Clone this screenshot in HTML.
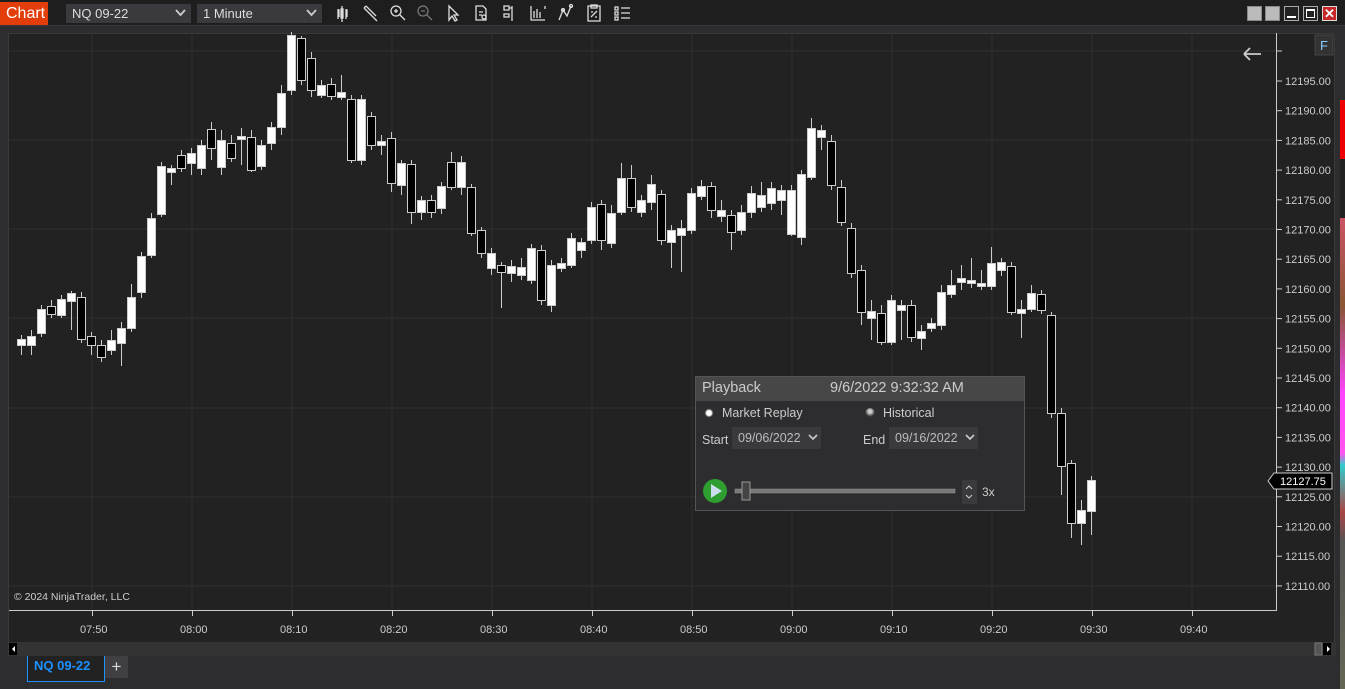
<!DOCTYPE html>
<html><head><meta charset="utf-8"><style>
*{margin:0;padding:0;box-sizing:border-box}
body{width:1345px;height:689px;background:#2d2d30;position:relative;overflow:hidden;font-family:"Liberation Sans",sans-serif;color:#ddd}
.abs{position:absolute}
#top{left:0;top:0;width:1345px;height:26px;background:#1e1e1e;border-bottom:1px solid #3a3a3a}
.sel{position:absolute;top:4px;height:19px;background:#3a3a3e;color:#ddd;font-size:13px;line-height:19px;padding-left:6px}
.sel svg{position:absolute;right:5px;top:5px}
.ti{position:absolute;top:5px}
.wb{position:absolute;top:6px;width:15px;height:15px;border:1px solid #888}
</style></head><body>
<div id="top" class="abs">
 <div class="abs" style="left:0;top:2px;width:48px;height:23px;background:#e23d0b;color:#fff;font-size:16px;line-height:23px;padding-left:6px">Chart</div>
 <div class="sel" style="left:66px;width:125px">NQ 09-22<svg width="11" height="8"><path d="M1 1l4.5 5 4.5-5" stroke="#ccc" stroke-width="1.8" fill="none"/></svg></div>
 <div class="sel" style="left:197px;width:125px">1 Minute<svg width="11" height="8"><path d="M1 1l4.5 5 4.5-5" stroke="#ccc" stroke-width="1.8" fill="none"/></svg></div>
 <svg class="ti" style="left:0;top:0" width="640" height="26" fill="none" stroke="#ddd" stroke-width="1.3">
  <path d="M338 9v10M342 6v16M346 9v10M338 10h1v7M346 10h1v7" /><rect x="341" y="9" width="2" height="9" fill="#ddd"/>
  <path d="M364 8l10 10M366 6l10 10M364 8l2-2M374 18l3 3"/>
  <circle cx="396" cy="11" r="5"/><path d="M400 15l5 5M394 11h4M396 9v4"/>
  <circle cx="423" cy="11" r="5" stroke="#777"/><path d="M427 15l5 5M421 11h4" stroke="#777"/>
  <path d="M449 6v14l3-4 3 5 2-1-3-5h4z"/>
  <path d="M476 6h7l3 3v11h-10zM479 12h4M479 15h3"/><circle cx="484" cy="17" r="2"/>
  <path d="M504 6h5v4h-5zM512 6v15M504 14h5v3h-5zM509 8h3"/>
  <path d="M531 6v14h14M534 11v7M537 9v9M540 12v6M545 6v3"/>
  <path d="M559 20l4-10 4 6 4-10M559 20"/><circle cx="563" cy="10" r="1.5"/><circle cx="571" cy="6" r="1.5"/>
  <path d="M588 6h12v15h-12zM591 5h6v3h-6zM591 17l6-6M591 12h2M595 17h2"/>
  <path d="M615 7h3v3h-3zM615 12h3v3h-3zM615 17h3v3h-3zM621 8h9M621 13h9M621 18h9"/>
 </svg>
 <div class="wb" style="left:1247px;background:#bbb"></div>
 <div class="wb" style="left:1265px;background:#bbb"></div>
 <div class="wb" style="left:1284px;background:#222;border-color:#aaa"><div class="abs" style="left:2px;top:9px;width:9px;height:2px;background:#fff"></div></div>
 <div class="wb" style="left:1303px;background:#222;border-color:#aaa"><div class="abs" style="left:2px;top:2px;width:9px;height:9px;border:1px solid #fff;border-top-width:2px"></div></div>
 <div class="wb" style="left:1322px;background:#c62828;border-color:#ddd;color:#fff;font-size:13px;line-height:13px;text-align:center;font-weight:bold">✕</div>
</div>
<div class="abs" style="left:8px;top:33px;width:1327px;height:623px;background:#222;border:1px solid #3a3a3a"></div>
<div class="abs" style="left:1340px;top:100px;width:5px;height:589px;background:linear-gradient(#e00 0,#e00 10%,#222 10%,#222 20%,#c56 20%,#853 35%,#f4f 50%,#f5e 60%,#3cc 62%,#a44 70%,#555 75%,#665 100%)"></div>
<svg class="abs" style="left:0;top:0" width="1345" height="689" id="ch">
 <g stroke="#303030" stroke-width="1">
  <path d="M92 33V610M192 33V610M292 33V610M392 33V610M492 33V610M592 33V610M692 33V610M792 33V610M892 33V610M992 33V610M1092 33V610M1192 33V610"/>
  <path d="M9 51H1276M9 140H1276M9 229H1276M9 318H1276M9 408H1276M9 497H1276M9 586H1276"/>
 </g>
 <path d="M9 610.5H1276.5V33" stroke="#ccc" fill="none"/>
 <g stroke="#ccc" id="ticks"></g>
 <g id="candles"></g>
 <g font-size="11" fill="#ccc" font-family="Liberation Sans,sans-serif" id="lbl"></g>
 <path d="M1244 54h17M1244 54l6-6M1244 54l6 6" stroke="#ccc" stroke-width="1.8" fill="none"/>
 <rect x="1315" y="35" width="18" height="20" fill="#333" stroke="#444"/>
 <text x="1320" y="50" fill="#8cf" font-size="13">F</text>
 <path d="M1268 481l6-8h58v16h-58z" fill="#000" stroke="#ccc"/>
 <text x="1280" y="485" fill="#fff" font-size="11">12127.75</text>
 <text x="14" y="600" fill="#ccc" font-size="10.5">© 2024 NinjaTrader, LLC</text>
 <rect x="9" y="642" width="1327" height="14" fill="#333"/>
 <rect x="9" y="643" width="8" height="12" fill="#000"/><path d="M15 646v6l-3-3z" fill="#fff"/>
 <rect x="1315" y="643" width="7" height="12" fill="#555" stroke="#777"/>
 <rect x="1323" y="643" width="8" height="12" fill="#000"/><path d="M1327 646v6l3-3z" fill="#fff"/>
</svg>
<div class="abs" style="left:27px;top:656px;width:78px;height:26px;border:1px solid #1e90ff;border-top:none;background:#222;color:#1e90ff;font-weight:bold;font-size:13px;line-height:20px;padding-left:6px">NQ 09-22</div>
<div class="abs" style="left:105px;top:656px;width:23px;height:22px;background:#3f3f44;color:#ddd;font-size:17px;line-height:22px;text-align:center">+</div>
<div class="abs" style="left:695px;top:376px;width:330px;height:135px;background:#2d2d30;border:1px solid #555;font-size:12.5px">
 <div style="height:24px;background:#474747;color:#ccc;font-size:14.5px;line-height:23px;padding-left:6px">Playback<span style="position:absolute;left:134px">9/6/2022 9:32:32 AM</span></div>
 <div class="abs" style="left:8px;top:31px;width:10px;height:10px;border-radius:50%;background:radial-gradient(#fff 35%,#333 60%)"></div>
 <div class="abs" style="left:26px;top:29px;color:#ccc">Market Replay</div>
 <div class="abs" style="left:169px;top:31px;width:10px;height:10px;border-radius:50%;background:radial-gradient(circle at 50% 35%,#ccc 20%,#333 60%)"></div>
 <div class="abs" style="left:187px;top:29px;color:#ccc">Historical</div>
 <div class="abs" style="left:6px;top:56px;color:#ccc">Start</div>
 <div class="abs" style="left:36px;top:50px;width:89px;height:22px;background:#3a3a3e;color:#bbb;line-height:22px;padding-left:6px">09/06/2022</div>
 <div class="abs" style="left:167px;top:56px;color:#ccc">End</div>
 <div class="abs" style="left:193px;top:50px;width:89px;height:22px;background:#3a3a3e;color:#bbb;line-height:22px;padding-left:6px">09/16/2022</div>
 <svg class="abs" style="left:0;top:50px" width="330" height="80" fill="none">
  <path d="M113 8l4 4 4-4M270 8l4 4 4-4" stroke="#ccc" stroke-width="1.6"/>
  <circle cx="19" cy="64" r="12" fill="#2e9e30"/><path d="M15 57v14l11-7z" fill="#cde"/>
  <rect x="39" y="62" width="220" height="4" fill="#777" stroke="#999" stroke-width=".5"/>
  <rect x="46" y="55" width="8" height="18" fill="#444" stroke="#999"/>
  <rect x="266" y="53" width="15" height="24" fill="#3a3a3e"/>
  <path d="M270 62l3-3 3 3M270 68l3 3 3-3" stroke="#ccc"/>
  <text x="286" y="69" fill="#ccc" font-size="12" font-family="Liberation Sans">3x</text>
 </svg>
</div>
<script>
var d=[[21,339,345,335,355,1],[31,336,345,330,355,1],[41,309,333,305,337,1],[51,306,314,300,318,0],[61,299,315,295,318,1],[71,293,301,291,330,1],[81,297,339,292,343,0],[91,336,345,332,355,0],[101,345,357,340,362,0],[111,340,350,330,355,1],[121,328,343,322,366,1],[131,297,328,284,332,1],[141,256,292,252,298,1],[151,218,255,213,258,1],[161,166,214,162,217,1],[171,168,172,165,185,1],[181,155,168,150,172,0],[191,153,163,148,175,1],[201,145,168,140,175,1],[211,129,148,122,160,0],[221,140,167,130,175,1],[231,143,158,135,162,0],[241,136,139,128,165,1],[251,137,170,130,172,0],[261,145,166,140,170,1],[271,127,143,122,150,1],[281,93,127,85,135,1],[291,35,90,32,95,1],[301,38,80,36,85,0],[311,58,90,52,97,0],[321,85,95,80,98,1],[331,84,96,78,100,0],[341,92,97,75,100,1],[351,99,160,95,163,0],[361,99,160,95,165,1],[371,116,145,112,150,0],[381,141,145,135,155,1],[391,138,183,132,192,0],[401,163,185,160,195,1],[411,164,212,160,224,0],[421,200,212,196,220,1],[431,200,212,195,218,0],[441,186,208,182,214,1],[451,162,187,152,190,0],[461,162,187,156,195,1],[471,187,233,184,236,0],[481,230,253,227,258,0],[491,253,268,248,275,1],[501,265,272,262,308,0],[511,266,273,260,282,1],[521,267,275,258,280,1],[531,248,280,244,284,1],[541,250,300,245,305,0],[551,265,305,260,312,1],[561,263,268,258,272,1],[571,238,265,233,268,1],[581,242,250,238,258,1],[591,207,240,202,244,1],[601,204,240,200,250,0],[611,213,243,205,248,1],[621,178,212,163,215,1],[631,178,207,165,212,0],[641,200,212,195,217,1],[651,184,202,175,210,1],[661,194,240,190,245,0],[671,230,242,225,268,1],[681,228,235,220,272,1],[691,193,230,188,234,1],[701,186,196,180,200,1],[711,186,210,182,218,0],[721,210,216,200,222,1],[731,215,232,210,250,0],[741,212,230,205,235,1],[751,193,212,186,218,1],[761,195,207,182,212,1],[771,188,203,182,210,1],[781,190,200,185,215,1],[791,190,234,185,236,1],[801,174,237,170,245,1],[811,128,177,118,180,1],[821,130,137,125,150,1],[831,141,185,135,190,0],[841,187,222,180,226,0],[851,228,273,223,278,0],[861,270,312,265,325,0],[871,311,318,300,340,1],[881,313,342,305,345,0],[891,300,342,295,345,1],[901,305,310,300,340,1],[911,305,337,300,342,0],[921,331,338,325,350,1],[931,323,328,318,332,1],[941,292,325,285,330,1],[951,285,294,270,298,1],[961,278,282,265,290,1],[971,280,283,258,288,1],[981,283,286,270,290,1],[991,263,286,247,290,1],[1001,262,270,258,276,1],[1011,266,312,262,315,0],[1021,309,313,300,338,1],[1031,293,309,285,312,1],[1041,294,310,290,314,0],[1051,315,413,312,418,0],[1061,413,466,408,495,0],[1071,463,523,460,538,0],[1081,510,523,500,545,1],[1091,480,511,476,535,1]];
var s='';d.forEach(function(c){var x=c[0];s+='<path d="M'+(x+.5)+' '+c[3]+'V'+c[4]+'" stroke="#ccc"/>';s+='<rect x="'+(x-3.5)+'" y="'+(c[1]+.5)+'" width="8" height="'+Math.max(2,c[2]-c[1])+'" fill="'+(c[5]?'#fff':'#000')+'" stroke="#ccc"/>';});
document.getElementById('candles').innerHTML=s;
var t='',l='';var times=['07:50','08:00','08:10','08:20','08:30','08:40','08:50','09:00','09:10','09:20','09:30','09:40'];
times.forEach(function(tm,i){var x=92+i*100;t+='<path d="M'+(x+.5)+' 611v5"/>';l+='<text x="'+(x-12)+'" y="633">'+tm+'</text>';});
for(var p=12195;p>=12110;p-=5){var y=81+(12195-p)*5.94;t+='<path d="M1277 '+y.toFixed(1)+'h5"/>';l+='<text x="1285" y="'+(y+4).toFixed(1)+'">'+p+'.00</text>';}
t+='<path d="M1277 51h5"/>';
document.getElementById('ticks').innerHTML=t;document.getElementById('lbl').innerHTML=l;
</script>
</body></html>
